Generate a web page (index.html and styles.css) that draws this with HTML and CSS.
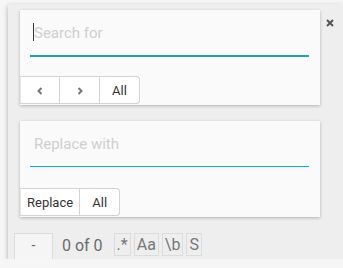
FILE: index.html
```html
<!DOCTYPE html>
<html lang="en">
<head>
    <meta charset="UTF-8">
    <meta name="viewport" content="width=device-width, initial-scale=1.0">
    <title>Search and replace</title>
    <link rel="stylesheet" href="styles.css">
</head>
<body>
    <div class="panel">
        <button class="close" title="Close">
            <svg width="8" height="8" viewBox="0 0 8 8"><path d="M1 1L7 7M7 1L1 7" stroke="#555" stroke-width="2"/></svg>
        </button>

        <div class="card">
            <div class="field focused">
                <span class="caret"></span><span class="placeholder">Search for</span>
            </div>
            <div class="btn-group">
                <button class="btn" title="Previous">
                    <svg width="6" height="8" viewBox="0 0 6 8"><path d="M4.5 1L1.5 4L4.5 7" fill="none" stroke="#777" stroke-width="2"/></svg>
                </button>
                <button class="btn" title="Next">
                    <svg width="6" height="8" viewBox="0 0 6 8"><path d="M1.5 1L4.5 4L1.5 7" fill="none" stroke="#777" stroke-width="2"/></svg>
                </button>
                <button class="btn">All</button>
            </div>
        </div>

        <div class="card">
            <div class="field">
                <span class="placeholder">Replace with</span>
            </div>
            <div class="btn-group">
                <button class="btn">Replace</button>
                <button class="btn">All</button>
            </div>
        </div>

        <div class="footer">
            <button class="minus">-</button>
            <span class="count">0 of 0</span>
            <span class="opt">.*</span>
            <span class="opt">Aa</span>
            <span class="opt">\b</span>
            <span class="opt">S</span>
        </div>
    </div>
</body>
</html>
```

FILE: styles.css
```css
:root {
    --panel-color: #eeeeee;
    --card-color: #fafafa;
    --teal: #1ca4ae;
    --blue: #00aeff;
    --hint: #cfcfcf;
}

body {
    margin: 0;
    background: #f6f6f6;
    font-family: Roboto, 'Noto Sans', sans-serif;
    overflow: hidden;
}

.panel {
    position: relative;
    margin: 4px 0 0 8px;
    height: 255px;
    background: var(--panel-color);
    box-shadow: 0 2px 5px rgba(0, 0, 0, 0.3);
    padding: 6px 0 0 12px;
    box-sizing: border-box;
}

.close {
    position: absolute;
    top: 15px;
    right: 9px;
    border: none;
    background: none;
    padding: 0;
    width: 8px;
    height: 8px;
    display: flex;
}

.card {
    width: 300px;
    height: 95px;
    background: var(--card-color);
    box-shadow: 0 1px 3px rgba(0, 0, 0, 0.25);
    margin-bottom: 16px;
    display: flex;
    flex-direction: column;
}

.card + .card {
    height: 96px;
}

.field {
    margin: 0 11px 0 10px;
    height: 46px;
    border-bottom: 1px solid var(--blue);
    display: flex;
    align-items: center;
    padding: 0 4px;
    box-sizing: border-box;
}

.field.focused {
    height: 47px;
    border-bottom: 2px solid var(--teal);
}

.caret {
    width: 1px;
    height: 18px;
    background: #333;
    margin: -2px 0 0 -1px;
}

.placeholder {
    font-size: 15px;
    color: var(--hint);
}

.btn-group {
    display: flex;
    margin-top: auto;
    margin-bottom: 1px;
}

.btn {
    height: 28px;
    min-width: 40px;
    padding: 0 6px;
    background: #fff;
    border: 1px solid #d3d3d3;
    border-left: none;
    font-family: inherit;
    font-size: 13px;
    color: #333;
    box-sizing: border-box;
    display: flex;
    align-items: center;
    justify-content: center;
}

.btn:first-child {
    border-left: 1px solid #e6e6e6;
}

.btn:last-child {
    border-bottom-right-radius: 4px;
    border-top-right-radius: 4px;
}

.btn svg {
    margin-top: 2px;
}

.footer {
    display: flex;
    align-items: center;
    margin-left: -6px;
    height: 29px;
}

.minus {
    width: 39px;
    height: 29px;
    background: #f5f5f5;
    border: 1px solid #dcdcdc;
    border-bottom: none;
    font-family: inherit;
    font-size: 14px;
    color: #666;
    margin-right: 9px;
    padding-bottom: 8px;
}

.count {
    font-size: 16px;
    color: #6b6b6b;
    margin-right: 11px;
    margin-top: -4px;
}

.opt {
    height: 23px;
    border: 1px solid #dcdcdc;
    box-sizing: border-box;
    padding: 0 2px;
    margin-right: 3px;
    margin-top: -7px;
    font-size: 16px;
    line-height: 21px;
    color: #777;
}
```
